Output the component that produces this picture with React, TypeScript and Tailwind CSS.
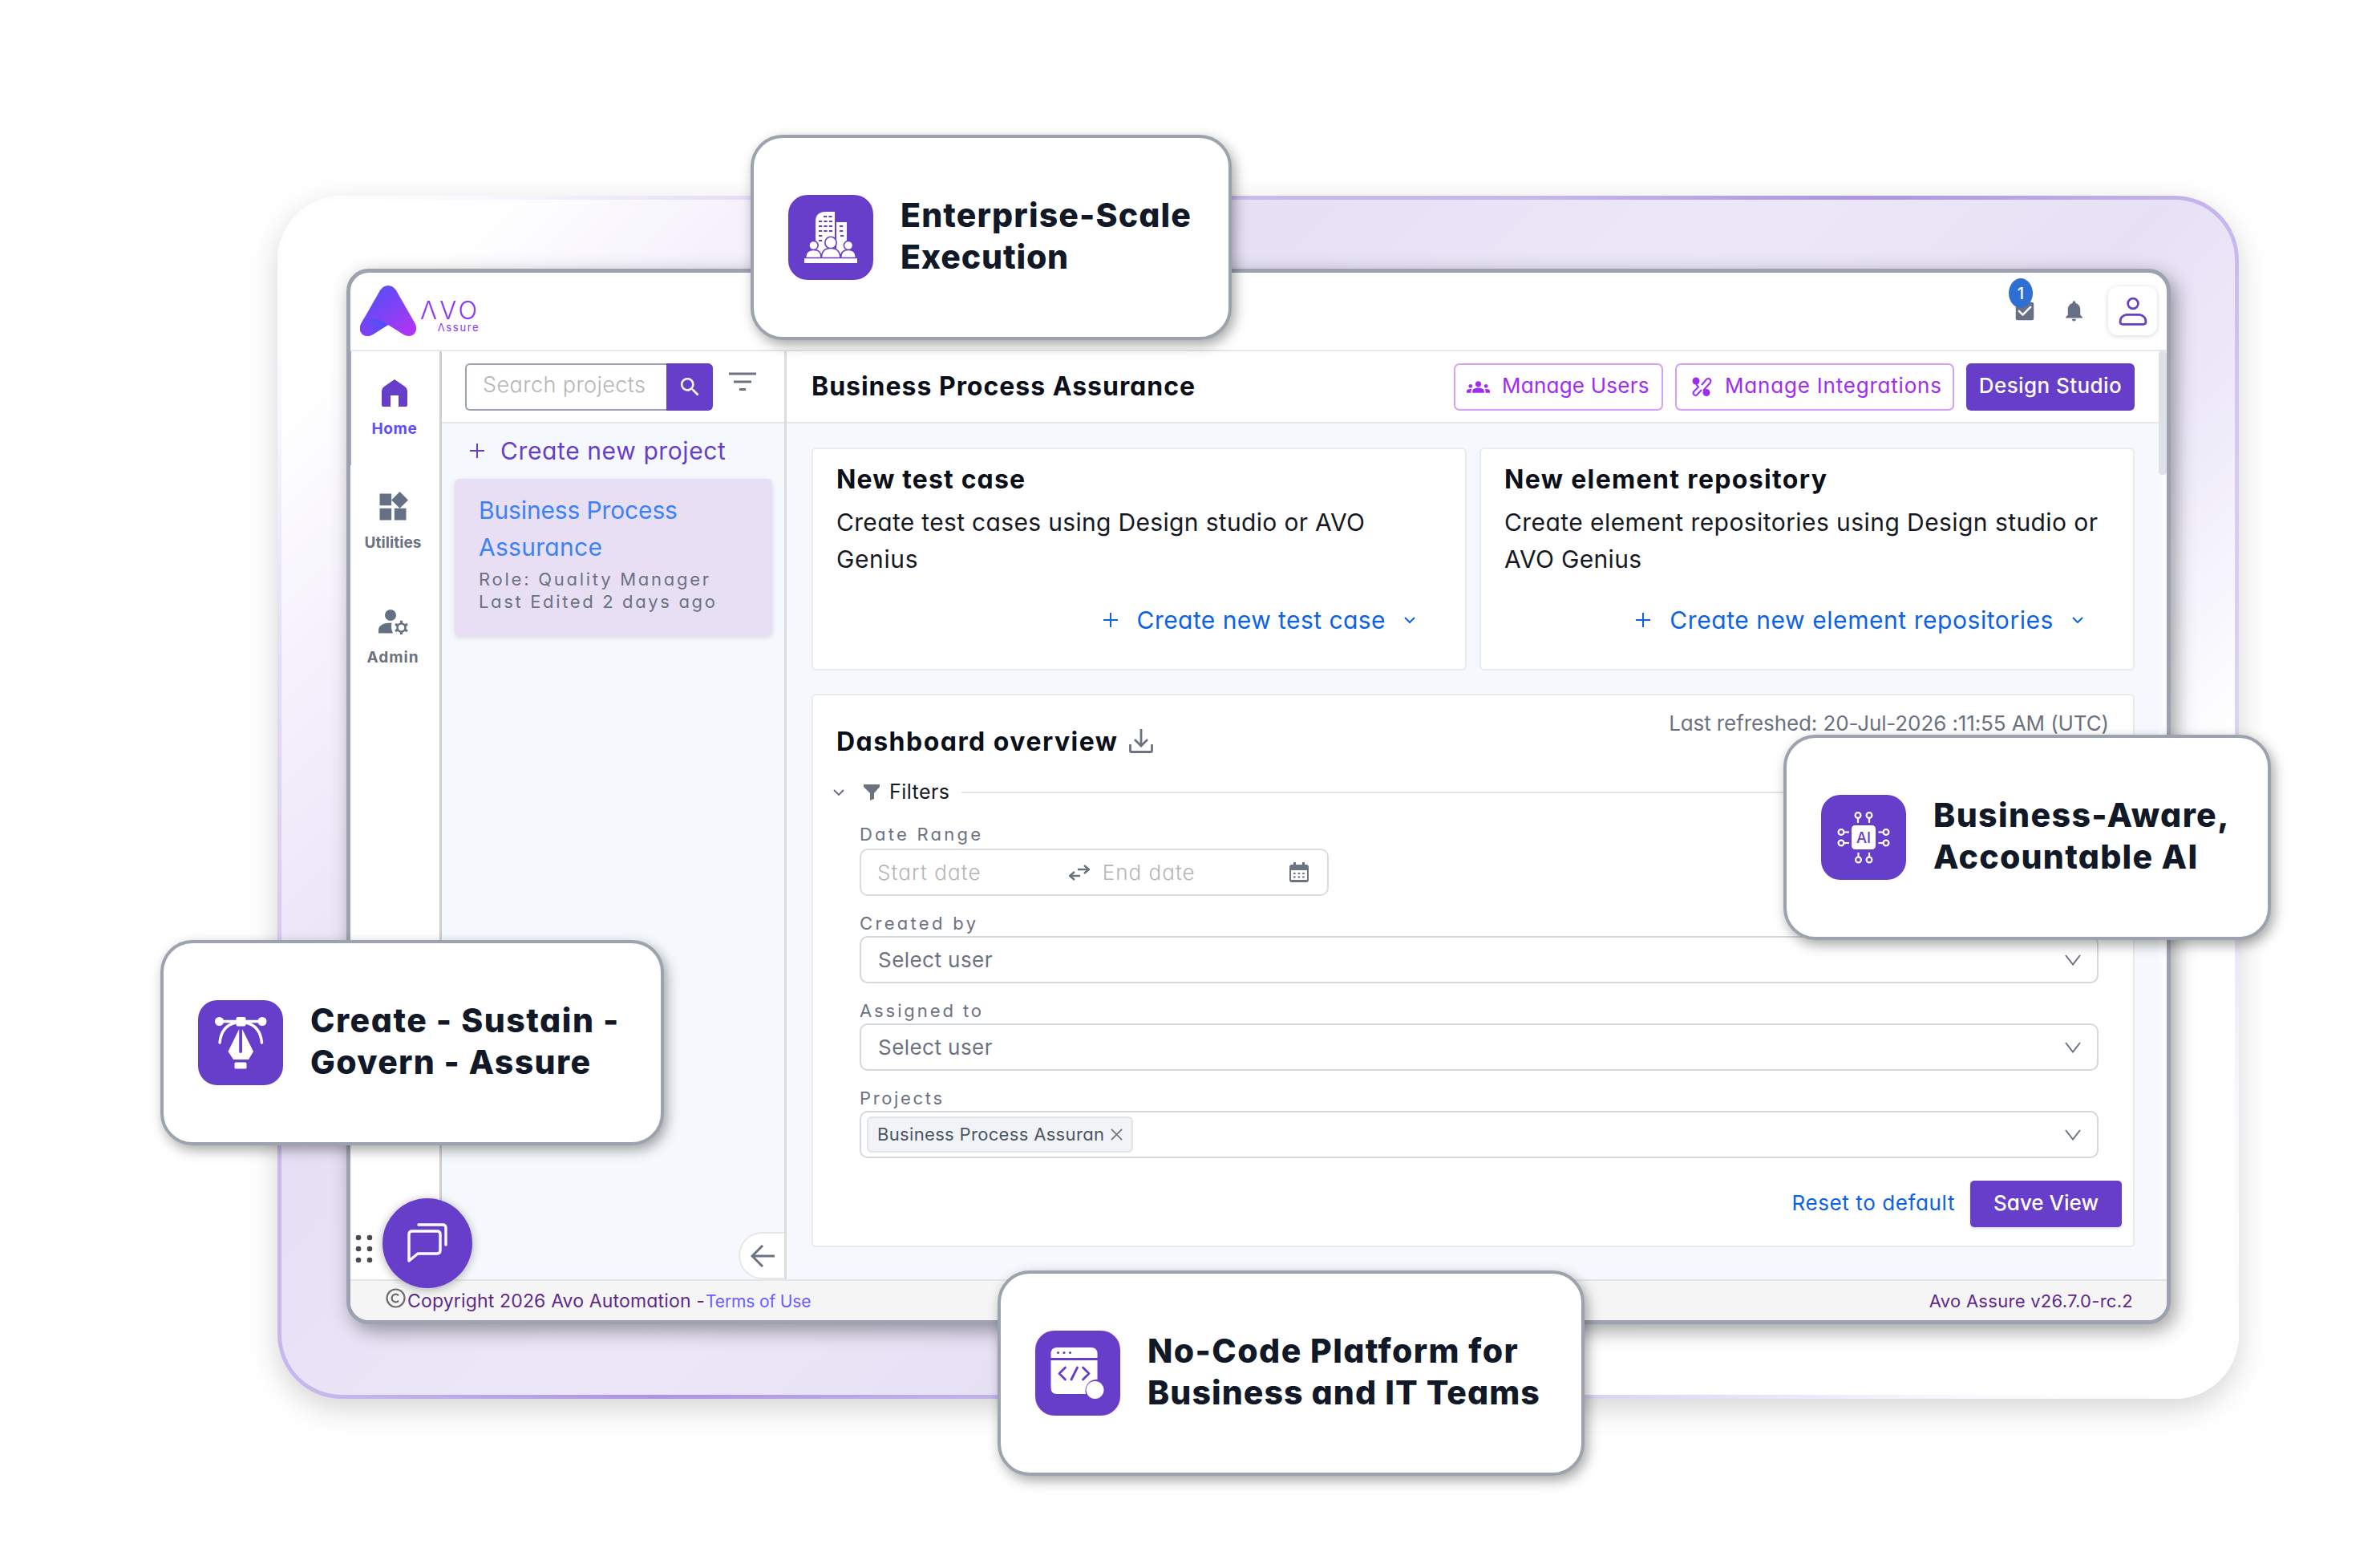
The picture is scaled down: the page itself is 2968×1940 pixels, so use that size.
import type { ReactNode } from "react";
import { MdWidgets, MdGroups, MdNotifications, MdCheckBox, MdSearch } from "react-icons/md";

function T({ c = "", children }: { c?: string; children: ReactNode }) {
  return <span className={"inline-block whitespace-nowrap " + c}>{children}</span>;
}

function Feature({ pos, icon, children }: { pos: string; icon: ReactNode; children: ReactNode }) {
  return (
    <div className={"absolute flex h-[256px] items-center gap-[34px] rounded-[40px] border-4 border-[#9ca3af] bg-white pl-[43px] shadow-[4px_6px_16px_rgba(0,0,0,0.35)] " + pos}>
      <div className="h-[106px] w-[106px] shrink-0 rounded-[24px] bg-[#673ec9]">{icon}</div>
      <div className="-mt-1 flex flex-col items-start text-[41px] font-extrabold leading-[52px] text-[#111827]">{children}</div>
    </div>
  );
}

function BuildingIcon() {
  return (
    <svg viewBox="0 0 106 106" className="h-full w-full">
      <path d="M34 74V33q0-12 13-12h11v53z" fill="#fff" />
      <path d="M60 34h13v40H60z" fill="#fff" />
      <g stroke="#673ec9" strokeWidth="1.8">
        <path d="M44 27h12M38 33h18M38 39h18M38 45h18M38 51h6M38 57h6M64 39h6M64 45h6M65 51h5" strokeDasharray="4.2 2.2" />
      </g>
      <g fill="#fff" stroke="#673ec9" strokeWidth="1.6">
        <circle cx="31.500" cy="63" r="5.600" />
        <path d="M21.500 78.500q0-10 10-10t9.500 10z" />
        <circle cx="75" cy="63" r="5.600" />
        <path d="M65.500 78.500q0-10 9.500-10t9.500 10z" />
        <circle cx="53" cy="59.500" r="7.200" />
        <path d="M41.500 78.500q0-12 11.500-12t12 12z" />
      </g>
      <path d="M20 79.300h66v5.700H20z" fill="#fff" />
    </svg>
  );
}

function ChipIcon() {
  return (
    <svg viewBox="0 0 106 106" className="h-full w-full">
      <rect x="38" y="38" width="30" height="30" rx="4.500" fill="#fff" />
      <g fill="none" stroke="#fff" strokeWidth="2.200">
        <circle cx="46" cy="25.500" r="3.400" /><path d="M46 29v6" />
        <circle cx="60" cy="25.500" r="3.400" /><path d="M60 29v6" />
        <circle cx="46.500" cy="81" r="3.400" /><path d="M46.500 77.500v-5.500" />
        <circle cx="60" cy="81" r="3.400" /><path d="M60 77.500v-5.500" />
        <circle cx="25" cy="46.500" r="3.400" /><path d="M28.500 46.500h6.500" />
        <circle cx="25" cy="60" r="3.400" /><path d="M28.500 60h6.500" />
        <circle cx="81" cy="46.500" r="3.400" /><path d="M77.500 46.500h-6" />
        <circle cx="81" cy="60" r="3.400" /><path d="M77.500 60h-6" />
      </g>
      <text x="53" y="59.800" textAnchor="middle" fontSize="18.500" fontWeight="500" fill="#673ec9">AI</text>
    </svg>
  );
}

function PenIcon() {
  return (
    <svg viewBox="0 0 106 106" className="h-full w-full">
      <g fill="#fff">
        <circle cx="26.500" cy="26.500" r="5.500" /><circle cx="80" cy="26.500" r="5.500" />
        <rect x="47.500" y="21" width="12" height="11.500" rx="2" />
        <path d="M51.200 36L37.500 64l6.500 10h19l6-10L55 36v28a1.900 2 0 0 1-3.800 0z" />
        <rect x="45.500" y="77.500" width="15" height="8" rx="1.500" />
      </g>
      <g fill="none" stroke="#fff" strokeWidth="3.400" strokeLinecap="round">
        <path d="M26 26.500h54" /><path d="M27 53q2-21 20-25M79.500 53q-2-21-20-25" />
      </g>
    </svg>
  );
}

function CodeIcon() {
  return (
    <svg viewBox="0 0 106 106" className="h-full w-full">
      <path d="M19.500 34v-5q0-8 8-8h42q8 0 8 8v5z" fill="#fff" />
      <path d="M19.500 37h58v24a14 14 0 0 0-14.500 18H27q-7.500 0-7.500-8z" fill="#fff" />
      <circle cx="74.500" cy="74" r="11" fill="#fff" />
      <g fill="#673ec9"><circle cx="28.500" cy="27.500" r="1.600" /><circle cx="36" cy="27.500" r="1.600" /><circle cx="43.500" cy="27.500" r="1.600" /></g>
      <path d="M37.500 46l-7.500 7.500 7.500 7.500M52.500 46l-7.500 15M59.500 46l7.500 7.500-7.500 7.500" fill="none" stroke="#673ec9" strokeWidth="2.800" strokeLinecap="round" strokeLinejoin="round" />
    </svg>
  );
}

const Plus = () => (
  <svg viewBox="0 0 18 18" className="h-[18px] w-[18px]"><path d="M9 0v18M0 9h18" stroke="currentColor" strokeWidth="2" /></svg>
);
const SmallChevron = () => (
  <svg viewBox="0 0 14 8" className="h-[8px] w-[14px]"><path d="M1 1l6 6 6-6" fill="none" stroke="currentColor" strokeWidth="2" /></svg>
);

function ActionCard({ title, lines, action }: { title: ReactNode; lines: ReactNode; action: ReactNode }) {
  return (
    <div className="flex h-[278px] flex-1 flex-col rounded-[6px] border-2 border-[#e8eaee] bg-white pl-[29px] pt-[15px]">
      <div className="text-[32px] font-bold leading-[46px] text-[#0b0f19]">{title}</div>
      <div className="mt-[7px] flex flex-col items-start text-[30px] leading-[46px] text-[#15181f]">{lines}</div>
      <div className="mt-[30px] flex items-center justify-end pr-[62px] text-[30px] leading-[46px] text-[#0b62e8]">
        <Plus />
        <span className="ml-[24px] mr-[23px]">{action}</span>
        <SmallChevron />
      </div>
    </div>
  );
}

function Select({ label, children }: { label: ReactNode; children: ReactNode }) {
  return (
    <div className="mt-[20px]">
      <div className="text-[22px] leading-[28px] text-[#6b7280]">{label}</div>
      <div className="mt-[2px] flex h-[59px] items-center rounded-[10px] border-2 border-[#d3d8df] pr-[20px]">
        {children}
        <svg viewBox="0 0 20 14" className="ml-auto h-[14px] w-[20px]"><path d="M1 1l9 11.500L19 1" fill="none" stroke="#6b7280" strokeWidth="2" /></svg>
      </div>
    </div>
  );
}

export default function App() {
  return (
    <div className="relative h-[1940px] w-[2968px] overflow-hidden bg-white pl-[346px] pt-[244px] font-[Inter,sans-serif] [font-feature-settings:'cv11']">
      <div className="h-[1500px] w-[2446px] rounded-[80px] bg-[linear-gradient(135deg,#ffffff_0%,#faf9ff_6%,#e3dcf6_15%,#c8baeb_31%,#c5b6ec_40%,#ac94e2_50%,#c2b2ea_60%,#d6c9f1_70%,#ddd4f4_80%,#faf8fe_91%,#ffffff_100%)] p-[5px] shadow-[0_12px_36px_rgba(0,0,0,0.17)]">
        <div className="h-full rounded-[75px] bg-[linear-gradient(135deg,#ffffff_7%,#f4f0fc_16%,#e6e0f5_31%,#ece7f8_47%,#e7e1f5_60%,#ece8f9_67%,#ffffff_79%)] pl-[81px] pt-[86px]">
          <div className="relative flex h-[1316px] w-[2275px] flex-col overflow-hidden rounded-[28px] border-[5px] border-[#9ca3af] bg-white shadow-[6px_8px_24px_rgba(0,0,0,0.38)]">
            <header className="flex h-[98px] shrink-0 items-start border-b-2 border-[#e2e8f0]">
              <svg viewBox="0 0 70 63" className="ml-[12px] mt-[16px] h-[63px] w-[70px]">
                <defs>
                  <linearGradient id="lg" x1="0.200" y1="0.200" x2="0.900" y2="1"><stop offset="0" stopColor="#5b4df5" /><stop offset="1" stopColor="#b433f5" /></linearGradient>
                  <linearGradient id="lf" x1="0" y1="0.800" x2="1" y2="0.300"><stop offset="0" stopColor="#8b3df2" /><stop offset="1" stopColor="#4453f5" /></linearGradient>
                </defs>
                <path d="M25 6q4-6 10-6t10 6l24 42q3 8-2 13-6 4-13 0L35 49 16 61q-7 4-13 0-5-5-2-13z" fill="url(#lg)" />
                <path d="M14 41q10 0 21 8L16 61q-7 4-13 0-5-5-2-13l4-7q5-1 9 0z" fill="url(#lf)" />
              </svg>
              <div className="ml-[5px] mt-[32px] flex flex-col items-end text-[#8a35f5]">
                <div className="text-[31px] font-light leading-[30px]"><T c="tracking-[3.38px]">ΛVO</T></div>
                <div className="-mt-[1px] text-[13px] leading-[14px]"><T c="tracking-[1.67px]">Λssure</T></div>
              </div>
              <div className="ml-auto flex items-start pr-[12px] pt-[17px]">
                <div className="relative mr-[31px] mt-[16px]">
                  <MdCheckBox className="h-[30px] w-[30px] text-[#667085]" />
                  <div className="absolute -left-[5px] -top-[26px] flex h-[37px] w-[30px] items-center justify-center rounded-[50%] bg-[#2f6fd3] text-[20px] font-medium text-white">1</div>
                </div>
                <MdNotifications className="mr-[27px] mt-[15px] h-[31px] w-[31px] text-[#667085]" />
                <div className="flex h-[61px] w-[61px] items-center justify-center rounded-[12px] bg-white shadow-[0_1px_6px_rgba(0,0,0,0.16)]">
                  <svg viewBox="0 0 36 36" className="h-[36px] w-[36px]" fill="none" stroke="#673ec9" strokeWidth="2.700">
                    <circle cx="18" cy="8.500" r="6.400" /><path d="M9.500 22.300h17q7.500 2 7.500 9 0 3-3 3H5q-3 0-3-3 0-7 7.500-9z" />
                  </svg>
                </div>
              </div>
            </header>

            <div className="flex h-[1157px]">
              <nav className="flex w-[114px] shrink-0 flex-col items-center border-r-[3px] border-[#cfcfcf] text-[19px] font-bold leading-[24px] text-[#6b7280]">
                <div className="flex h-[142px] w-full flex-col items-center border-l border-[#a9a0ee] pr-[2px] pt-[35px] text-[#5f4bff]">
                  <svg viewBox="0 0 32 34" className="h-[34px] w-[32px]"><path d="M16 0l13 9q3 2 3 5v18q0 2-2 2h-9V20H11v14H2q-2 0-2-2V14q0-3 3-5z" fill="#673ec9" /></svg>
                  <div className="mt-[16px]"><T c="tracking-[0.66px]">Home</T></div>
                </div>
                <MdWidgets className="-ml-[6px] mt-[30px] h-[44px] w-[44px] text-[#667085]" />
                <div className="-ml-[5px] mt-[11px]"><T c="tracking-[0.08px]">Utilities</T></div>
                <svg viewBox="0 0 37 31" className="-ml-[5px] mt-[71px] h-[31px] w-[37px]" fill="#667085">
                  <circle cx="15" cy="7" r="7" />
                  <path d="M16.500 16.500q-16.500 0-16.500 9.500v3.500h18q-3-6-1.500-13z" />
                  <g fill="none" stroke="#667085">
                    <circle cx="28.500" cy="22.500" r="5" strokeWidth="2.600" />
                    <path d="M28.500 13.800v3M28.500 28.200v3M21 18.200l2.600 1.500M33.400 25.300l2.600 1.500M21 26.800l2.600-1.500M33.400 19.700l2.600-1.500" strokeWidth="3.200" />
                  </g>
                </svg>
                <div className="-ml-[5px] mt-[17px]"><T c="tracking-[0.99px]">Admin</T></div>
              </nav>

              <section className="flex w-[430px] shrink-0 flex-col border-r-[3px] border-[#dcdcdc] bg-[#f5f9fd]">
                <div className="flex h-[90px] shrink-0 items-center border-b-2 border-[#e4e7eb] bg-white pl-[29px]">
                  <div className="flex h-[59px] w-[251px] items-center rounded-l-[6px] border-2 border-r-0 border-[#9ca3af] pl-[20px] text-[27px] font-light text-[#b5b5b5]"><T c="-mt-1 tracking-[0.42px]">Search projects</T></div>
                  <div className="flex h-[59px] w-[58px] items-center justify-center rounded-r-[6px] bg-[#673ec9]"><MdSearch className="h-[31px] w-[31px] text-white" /></div>
                  <svg viewBox="0 0 34 24" className="-mt-[12px] ml-[20px] h-[24px] w-[34px]"><path d="M0 2h34M6 12h22M13 21.500h8" stroke="#6b7280" strokeWidth="3" /></svg>
                </div>
                <div className="flex h-[68px] items-center gap-[20px] pl-[35px] text-[30px] text-[#673ec9]"><Plus /><T c="tracking-[0.61px]">Create new project</T></div>
                <div className="mx-[16px] mt-[1px] flex h-[196px] w-[396px] flex-col items-start rounded-[6px] bg-[#e8dff5] pl-[30px] pt-[16px] text-[30px] leading-[46px] text-[#3b82f6] shadow-[0_2px_6px_rgba(0,0,0,0.12)]">
                  <T c="tracking-[-0.14px]">Business Process</T>
                  <T c="tracking-[0.29px]">Assurance</T>
                  <div className="mt-[3px] flex flex-col items-start text-[22px] leading-[28px] text-[#6b7280]">
                    <T c="tracking-[2.74px]">Role: Quality Manager</T>
                    <T c="tracking-[2.65px]">Last Edited 2 days ago</T>
                  </div>
                </div>
                <div className="mt-auto flex h-[59px] w-[57px] items-center justify-center self-end rounded-l-full border-2 border-r-0 border-[#e5e7eb] bg-white">
                  <svg viewBox="0 0 30 28" className="h-[28px] w-[30px]" fill="none" stroke="#6b7280" strokeWidth="3"><path d="M15 1L2 14l13 13M2 14h28" /></svg>
                </div>
              </section>

              <main className="flex w-[1711px] shrink-0 flex-col bg-[#f5f9fd]">
                <div className="flex h-[90px] shrink-0 items-center border-b-2 border-[#e4e7eb] bg-white pl-[31px] pr-[30px]">
                  <div className="text-[32px] font-bold text-[#0b0f19]"><T c="tracking-[0.98px]">Business Process Assurance</T></div>
                  <div className="ml-auto flex gap-[15px] text-[26px] text-[#a02cf0]">
                    <div className="flex h-[59px] w-[261px] items-center rounded-[7px] border-2 border-[#d3a0f7] pl-[14px]">
                      <MdGroups className="h-[29px] w-[29px]" /><T c="-mt-1 ml-[15px] tracking-[0.24px]">Manage Users</T>
                    </div>
                    <div className="flex h-[59px] w-[348px] items-center rounded-[7px] border-2 border-[#d3a0f7] pl-[18px]">
                      <svg viewBox="0 0 26 24" className="h-[24px] w-[26px]" fill="none" stroke="currentColor" strokeWidth="2">
                        <circle cx="6" cy="5" r="4.500" fill="currentColor" stroke="none" /><circle cx="19" cy="19.500" r="4.500" fill="currentColor" stroke="none" />
                        <path d="M13 10l6-7q2.500-2 4.500 0t0 4.500L15 17M6 9l3 3.500L3.500 18q-2 2 0 4t4 0L13 16" />
                      </svg>
                      <T c="-mt-1 ml-[16px] tracking-[0.8px]">Manage Integrations</T>
                    </div>
                    <div className="flex h-[59px] w-[210px] items-center justify-center rounded-[6px] bg-[#673ec9] font-medium text-white"><T c="-mt-1 tracking-[0.43px]">Design Studio</T></div>
                  </div>
                </div>
                <div className="pl-[31px] pr-[30px] pt-[30px]">
                  <div className="flex gap-[16px]">
                    <ActionCard
                      title={<T c="tracking-[1.13px]">New test case</T>}
                      lines={<><T c="tracking-[0.33px]">Create test cases using Design studio or AVO</T><T c="tracking-[0.61px]">Genius</T></>}
                      action={<T c="tracking-[0.44px]">Create new test case</T>}
                    />
                    <ActionCard
                      title={<T c="tracking-[1.35px]">New element repository</T>}
                      lines={<><T c="tracking-[0.43px]">Create element repositories using Design studio or</T><T c="tracking-[0.32px]">AVO Genius</T></>}
                      action={<T c="tracking-[0.56px]">Create new element repositories</T>}
                    />
                  </div>
                  <div className="mt-[29px] h-[690px] rounded-[6px] border-2 border-[#e8eaee] bg-white pt-[15px]">
                    <div className="flex items-start pl-[29px] pr-[30px]">
                      <div className="mt-[20px] text-[32px] font-bold leading-[46px] text-[#0b0f19]"><T c="tracking-[1.47px]">Dashboard overview</T></div>
                      <svg viewBox="0 0 30 30" className="ml-[13px] mt-[27px] h-[30px] w-[30px]" fill="none" stroke="#6b7280" strokeWidth="2.800"><path d="M15 0v21M7 13l8 8 8-8M1.500 19v8q0 1.500 1.500 1.500h24q1.500 0 1.500-1.500v-8" /></svg>
                      <div className="ml-auto text-[26px] leading-[40px] text-[#6b7280]"><T c="tracking-[-0.1px]">Last refreshed: 20-Jul-2026 :11:55 AM (UTC)</T></div>
                    </div>
                    <div className="mt-[24px] flex h-[32px] items-center pl-[25px] pr-[44px] text-[25px] text-[#15181f]">
                      <span className="text-[#6b7280]"><SmallChevron /></span>
                      <svg viewBox="0 0 20 20" className="ml-[24px] h-[20px] w-[20px]"><path d="M0 0h20v3l-7 8v7l-5 2v-9L0 3z" fill="#6b7280" /></svg>
                      <T c="ml-[12px] tracking-[0.44px]">Filters</T>
                      <div className="ml-[15px] h-[2px] flex-1 bg-[#e3e5e8]" />
                    </div>
                    <div className="pl-[58px] pr-[43px] pt-[2px]">
                      <div className="mt-[20px] text-[22px] leading-[28px] text-[#6b7280]"><T c="tracking-[3.23px]">Date Range</T></div>
                      <div className="mt-[4px] flex h-[59px] w-[585px] items-center rounded-[10px] border-2 border-[#dcdcdc] pl-[20px] pr-[23px] text-[26px] font-light text-[#b5b5b5]">
                        <T c="tracking-[1.13px]">Start date</T>
                        <svg viewBox="0 0 26 20" className="ml-[109px] h-[20px] w-[26px]" fill="none" stroke="#6b7280" strokeWidth="2.400"><path d="M11 6h14M19 1l6 5-6 5M14 14H1M7 9l-6 5 6 5" /></svg>
                        <T c="ml-[16px] tracking-[1.05px]">End date</T>
                        <svg viewBox="0 0 24 25" className="ml-auto h-[25px] w-[24px]"><path d="M3 3h18q3 0 3 3v16q0 3-3 3H3q-3 0-3-3V6q0-3 3-3zM5 0h3v4H5zM16 0h3v4h-3z" fill="#6b7280" /><path d="M2 10h20v12H2z" fill="#fff" /><path d="M5 14h14M5 18.500h14" stroke="#6b7280" strokeWidth="2.200" strokeDasharray="2.600 3" /></svg>
                      </div>
                      <Select label={<T c="tracking-[3.32px]">Created by</T>}><T c="ml-[21px] text-[26px] tracking-[0.45px] text-[#6b7280]">Select user</T></Select>
                      <Select label={<T c="tracking-[2.91px]">Assigned to</T>}><T c="ml-[21px] text-[26px] tracking-[0.45px] text-[#6b7280]">Select user</T></Select>
                      <Select label={<T c="tracking-[2.65px]">Projects</T>}>
                        <div className="ml-[7px] flex h-[45px] w-[332px] items-center rounded-[6px] border-2 border-[#e2e4e8] bg-[#f2f3f6] pl-[11px] text-[22px] text-[#4b5563]">
                          <T c="tracking-[0.33px]">Business Process Assuran</T>
                          <svg viewBox="0 0 16 16" className="ml-[8px] h-[15px] w-[15px]"><path d="M1 1l14 14M15 1L1 15" stroke="#6b7280" strokeWidth="1.800" /></svg>
                        </div>
                      </Select>
                    </div>
                    <div className="mt-[28px] flex items-center justify-end gap-[19px] pr-[14px] text-[26px]">
                      <T c="-mt-1 tracking-[0.61px] text-[#0b62e8]">Reset to default</T>
                      <div className="flex h-[58px] w-[189px] items-center justify-center rounded-[5px] bg-[#673ec9] font-medium text-white shadow-[0_2px_3px_rgba(80,150,220,0.25)]"><T c="-mt-1">Save View</T></div>
                    </div>
                  </div>
                </div>
              </main>
              <div className="flex-1 bg-[#fafbfc]"><div className="h-[154px] rounded-[4px] bg-[#dee1e7]" /></div>
            </div>

            <footer className="flex flex-1 items-center border-t-2 border-[#e4e7ea] bg-[#f5f5f5] pl-[44px] pr-[42px] pt-[2px] text-[23px] text-[#5e2a8a]">
              <svg viewBox="0 0 25 25" className="-mt-[8px] h-[25px] w-[25px]" fill="none" stroke="#6b6b70" strokeWidth="2.200"><circle cx="12.500" cy="12.500" r="11" /><path d="M16 9.300a4.800 4.800 0 1 0 0 6.400" /></svg>
              <T c="ml-[2px] tracking-[0.16px]">Copyright 2026 Avo Automation -</T>
              <T c="ml-[1px] text-[21px] tracking-[-0.15px] text-[#6a5cff]">Terms of Use</T>
              <T c="ml-auto text-[22px] tracking-[0.28px]">Avo Assure v26.7.0-rc.2</T>
            </footer>

            <div className="absolute bottom-[40px] left-[6px] flex items-center gap-[12px]">
              <svg viewBox="0 0 22 36" className="mt-[14px] h-[36px] w-[22px]" fill="#4b4b4f"><circle cx="4" cy="4" r="3.300" /><circle cx="18" cy="4" r="3.300" /><circle cx="4" cy="18" r="3.300" /><circle cx="18" cy="18" r="3.300" /><circle cx="4" cy="32" r="3.300" /><circle cx="18" cy="32" r="3.300" /></svg>
              <div className="flex h-[112px] w-[112px] items-center justify-center rounded-full bg-[#673ec9] shadow-[0_2px_12px_rgba(0,0,0,0.3)]">
                <svg viewBox="0 0 50 50" className="h-[50px] w-[50px]" fill="none" stroke="#fff" strokeWidth="3.400"><path d="M2 47V14q0-4 4-4h31q4 0 4 4v20q0 4-4 4H13z" strokeLinejoin="round" /><path d="M14 2h30q4 0 4 4v21" strokeLinecap="round" /></svg>
              </div>
            </div>
          </div>
        </div>
      </div>

      <Feature pos="left-[936px] top-[168px] w-[600px]" icon={<BuildingIcon />}>
        <T c="tracking-[1.15px]">Enterprise-Scale</T>
        <T c="tracking-[0.85px]">Execution</T>
      </Feature>
      <Feature pos="left-[2224px] top-[916px] w-[608px]" icon={<ChipIcon />}>
        <T c="tracking-[1.4px]">Business-Aware,</T>
        <T c="tracking-[1.28px]">Accountable AI</T>
      </Feature>
      <Feature pos="left-[200px] top-[1172px] w-[628px]" icon={<PenIcon />}>
        <T c="tracking-[1.52px]">Create - Sustain -</T>
        <T c="tracking-[1.36px]">Govern - Assure</T>
      </Feature>
      <Feature pos="left-[1244px] top-[1584px] w-[732px]" icon={<CodeIcon />}>
        <T c="tracking-[1.42px]">No-Code Platform for</T>
        <T c="tracking-[1.06px]">Business and IT Teams</T>
      </Feature>
    </div>
  );
}
